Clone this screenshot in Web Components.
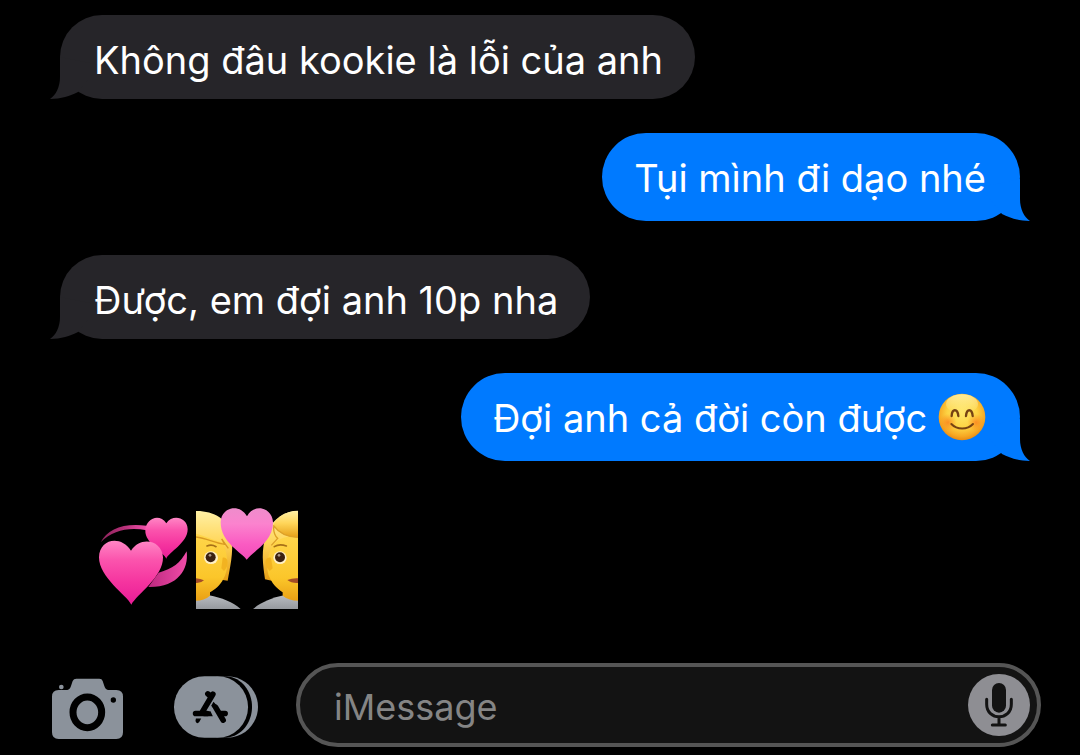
<!DOCTYPE html>
<html lang="vi">
<head>
<meta charset="utf-8">
<meta name="viewport" content="width=device-width, initial-scale=1">
<title>iMessage</title>
<style>
  body { margin: 0; background: #000; color: #fff; font-family: Inter, "Liberation Sans", sans-serif; }
</style>
</head>
<body>
<chat-app>
  <chat-bubble>Không đâu kookie là lỗi của anh</chat-bubble>
  <chat-bubble outgoing>Tụi mình đi dạo nhé</chat-bubble>
  <chat-bubble>Được, em đợi anh 10p nha</chat-bubble>
  <chat-bubble outgoing>Đợi anh cả đời còn được <smile-emoji></smile-emoji></chat-bubble>
  <big-emojis></big-emojis>
  <message-composer slot="composer"></message-composer>
</chat-app>

<script>
const define = (name, html) => {
  const template = document.createElement('template');
  template.innerHTML = html;
  customElements.define(name, class extends HTMLElement {
    constructor() {
      super();
      this.attachShadow({ mode: 'open' }).append(template.content.cloneNode(true));
    }
  });
};

define('chat-app', `
  <style>
    :host { display: flex; flex-direction: column; min-height: 100vh; box-sizing: border-box; padding-top: 15px; background: #000; }
    main { display: flex; flex-direction: column; align-items: flex-start; gap: 34px; padding: 0 60px; }
    footer { padding-top: 54px; }
  </style>
  <main><slot></slot></main>
  <footer><slot name="composer"></slot></footer>`);

define('chat-bubble', `
  <style>
    :host { --fill: #262529; display: block; position: relative; box-sizing: border-box; max-width: 80%;
      padding: 19px 32px 13px 34px; border-radius: 42px; background: var(--fill);
      font-size: 38px; line-height: 52px; }
    :host([outgoing]) { --fill: #007aff; align-self: flex-end; padding: 19px 34px 17px 32px; border-radius: 44px; }
    svg { position: absolute; left: -10px; bottom: 0; width: 54px; height: 44px; fill: var(--fill); }
    :host([outgoing]) svg { left: auto; right: -10px; transform: scaleX(-1); }
    span { position: relative; }
  </style>
  <svg viewBox="0 0 54 44" aria-hidden="true"><path d="M10 2V22C10 32 6 40 0 44C11 44 20 41 28 37L50 10Z"/></svg>
  <span><slot></slot></span>`);

define('smile-emoji', `
  <style>
    :host { display: inline-block; width: 48px; height: 48px; margin: -8px 0; vertical-align: -1px; }
    svg { display: block; width: 100%; height: 100%; }
  </style>
  <svg viewBox="109 100 144 144" role="img" aria-label="😊">
    <defs>
      <radialGradient id="f" cx=".5" cy=".42" r=".58"><stop offset="0" stop-color="#ffe868"/><stop offset=".55" stop-color="#fdd343"/><stop offset=".85" stop-color="#f6a823"/><stop offset="1" stop-color="#e98a12"/></radialGradient>
      <radialGradient id="c"><stop offset="0" stop-color="#fb7a1c" stop-opacity=".75"/><stop offset="1" stop-color="#fb8a1c" stop-opacity="0"/></radialGradient>
      <linearGradient id="h" x2="0" y2="1"><stop offset="0" stop-color="#fff6b0" stop-opacity=".8"/><stop offset="1" stop-color="#fff6b0" stop-opacity="0"/></linearGradient>
    </defs>
    <circle cx="181" cy="172" r="70" fill="url(#f)"/>
    <ellipse cx="181" cy="133" rx="48" ry="29" fill="url(#h)"/>
    <circle cx="139" cy="188" r="26" fill="url(#c)"/><circle cx="223" cy="188" r="26" fill="url(#c)"/>
    <g fill="none" stroke="#764313" stroke-linecap="round">
      <path stroke-width="7" d="M150 169C151 146 168 146 170 169M193 169C195 146 211 146 213 169"/>
      <path stroke-width="6" d="M149 193C166 211 197 211 214 193"/>
    </g>
  </svg>`);

define('big-emojis', `
  <style>
    :host { display: flex; gap: 7px; margin: 13px 0 0 38px; }
    svg { display: block; height: 101px; }
    .hearts { width: 91px; }
    .couple { width: 102px; }
  </style>
  <svg class="hearts" viewBox="54 39 273 303" role="img" aria-label="💞">
    <defs>
      <linearGradient id="a" x2="0" y2="1"><stop offset="0" stop-color="#ff86c5"/><stop offset=".3" stop-color="#fb54ad"/><stop offset=".65" stop-color="#f5349f"/><stop offset="1" stop-color="#e81c96"/></linearGradient>
      <linearGradient id="b" x2="1" y2="0"><stop offset="0" stop-color="#8d245c"/><stop offset=".5" stop-color="#b53078"/><stop offset="1" stop-color="#f151ab"/></linearGradient>
      <linearGradient id="r" x2="1" y2="0"><stop offset="0" stop-color="#bd2980"/><stop offset="1" stop-color="#f04ca8"/></linearGradient>
    </defs>
    <path fill="url(#b)" d="M62 142C82 101 132 83 200 92V106C145 96 99 106 62 142Z"/>
    <path fill="url(#r)" d="M320 169C327 224 293 278 205 276L236 233C278 222 301 204 320 169Z"/>
    <path fill="url(#a)" d="M259 191C253 174 194 145 196 106C198 69 239 54 259 85C277 57 322 66 323 103C323 144 266 172 259 191Z"/>
    <path fill="url(#a)" d="M154 329C140 300 57 248 57 187C58 132 122 119 153 167C181 121 247 135 249 187C250 246 171 298 154 329Z"/>
  </svg>
  <svg class="couple" viewBox="348 39 306 303" preserveAspectRatio="none" role="img" aria-label="💑">
    <defs>
      <linearGradient id="k" x2="0" y2="1"><stop offset="0" stop-color="#ffd64b"/><stop offset=".65" stop-color="#fbc62a"/><stop offset="1" stop-color="#eaa014"/></linearGradient>
      <linearGradient id="y" x2="0" y2="1"><stop offset="0" stop-color="#fff0a5"/><stop offset=".45" stop-color="#ffd65a"/><stop offset="1" stop-color="#e59e16"/></linearGradient>
      <linearGradient id="p" x2="0" y2="1"><stop offset="0" stop-color="#ee8ccb"/><stop offset=".3" stop-color="#fb83ce"/><stop offset=".7" stop-color="#fa5bc2"/><stop offset="1" stop-color="#f24bb8"/></linearGradient>
      <linearGradient id="s" x2="0" y2="1"><stop offset="0" stop-color="#b9bcc1"/><stop offset="1" stop-color="#96999e"/></linearGradient>
    </defs>
    <path fill="url(#s)" d="M348 306L387 301C425 308 459 322 482 342H348Z"/>
    <path fill="url(#s)" d="M654 306L612 301C576 308 543 322 519 342H654Z"/>
    <path fill="url(#y)" d="M348 48C399 47 447 72 455 125C461 174 449 221 443 257L424 254L415 220L420 145L348 130Z"/>
    <path fill="url(#k)" d="M348 116C378 123 405 138 428 142C446 180 446 228 430 252C420 272 404 284 390 292V302C379 312 363 317 348 317Z"/>
    <path fill="#f2b321" d="M428 188C446 183 448 213 432 228L424 220Z"/>
    <path fill="none" stroke="#d99a22" stroke-width="4" d="M348 126C378 129 407 145 434 148L425 132L445 160"/>
    <path fill="url(#y)" d="M654 47C615 47 579 71 562 110C540 166 550 211 555 253L575 257L588 190L591 141L654 125Z"/>
    <path fill="url(#k)" d="M654 126C621 121 595 130 580 150C560 180 556 225 570 250C580 272 596 284 608 292V302C620 312 638 317 654 317Z"/>
    <path fill="#f2b321" d="M573 188C551 183 552 213 569 228L578 220Z"/>
    <path fill="url(#y)" d="M579 91C601 119 625 127 654 128V48C618 48 592 64 579 91Z"/>
    <path fill="none" stroke="#dda129" stroke-width="4" d="M580 91C600 119 625 126 654 127M582 92C578 110 587 126 593 130L574 151"/>
    <ellipse cx="393" cy="188" rx="21" ry="19" fill="#fff0c4"/><ellipse cx="600" cy="188" rx="20" ry="19" fill="#fff0c4"/>
    <circle cx="392" cy="187" r="15" fill="#3a2111"/><circle cx="600" cy="187" r="15" fill="#3a2111"/>
    <circle cx="390" cy="181" r="4" fill="#a89588"/><circle cx="597" cy="181" r="4" fill="#a89588"/>
    <path fill="none" stroke="#a77118" stroke-width="5" stroke-linecap="round" d="M381 153Q395 147 408 155M583 155Q598 145 619 153"/>
    <path fill="#a34c27" d="M348 250Q361 251 372 256Q363 265 348 264ZM654 250Q637 249 622 255Q634 265 654 264Z"/>
    <path fill="url(#p)" d="M500 194C486 173 422 143 422 82C423 35 480 24 501 64C521 24 577 37 579 82C580 139 520 169 500 194Z"/>
  </svg>`);

define('message-composer', `
  <style>
    :host { display: flex; align-items: flex-end; padding: 0 39px 8px 52px; }
    button { display: block; border: 0; padding: 0; background: none; flex: none; }
    svg { display: block; width: 100%; height: 100%; }
    .camera { width: 71px; height: 61px; margin: 0 51px 8px 0; }
    .apps { width: 84px; height: 62px; margin: 0 38px 9px 0; }
    .field { flex: 1; min-width: 0; display: flex; align-items: center; box-sizing: border-box; height: 84px;
      padding: 0 7px 0 34px; border: 4px solid #555; border-radius: 42px; background: #131313; }
    input { flex: 1; min-width: 0; height: 60px; border: 0; padding: 0; margin: 4px 0 0; background: none; outline: 0; color: #fff;
      font: 36px Inter, "Liberation Sans", sans-serif; }
    input::placeholder { color: #858585; opacity: 1; }
    .mic { width: 62px; height: 62px; }
  </style>
  <button class="camera" type="button" aria-label="Camera">
    <svg viewBox="66 84 213 183"><g fill="#8b929b">
      <circle cx="94" cy="111" r="7"/>
      <path d="M86 120H112Q120 119 123 108L128 93Q131 86 139 86H208Q216 86 218 93L223 108Q226 119 234 120H259Q279 120 279 140V247Q279 267 259 267H86Q66 267 66 247V140Q66 120 86 120Z"/></g>
      <ellipse cx="172" cy="187" rx="43" ry="46" fill="none" stroke="#000" stroke-width="21"/>
      <circle cx="250" cy="150" r="8"/></svg>
  </button>
  <button class="apps" type="button" aria-label="Apps">
    <svg viewBox="431 79 253 185">
      <path fill="#8b929b" d="M560 79H592C645 80 684 122 684 171S645 263 592 264H560Z"/>
      <path d="M560 79H590C634 83 666 123 666 171S634 260 590 264H560Z"/>
      <rect x="431" y="79" width="223" height="185" rx="92" fill="#8b929b"/>
      <g fill="none" stroke="#000" stroke-width="17" stroke-linecap="round">
        <path d="M548 133L516 187M533 132L540 138M496 191H530M574 191H585M556 172L579 211"/></g>
      <path d="M520 184H541L548 199H520ZM550 156L560 167L548 174L543 168Z"/>
      <path d="M497 206H513L507 217Q502 223 498 218Q494 214 497 206Z"/>
    </svg>
  </button>
  <div class="field">
    <input type="text" placeholder="iMessage" aria-label="iMessage">
    <button class="mic" type="button" aria-label="Dictate">
      <svg viewBox="204 71 186 186"><circle cx="297" cy="164" r="93" fill="#8e8e93"/>
        <rect x="276" y="98" width="42" height="89" rx="21" fill="#131313"/>
        <path fill="none" stroke="#131313" stroke-width="9" stroke-linecap="round" d="M260 147V162C260 212 334 212 334 162V147M297 200V224M277 224H316"/></svg>
    </button>
  </div>`);
</script>
</body>
</html>
